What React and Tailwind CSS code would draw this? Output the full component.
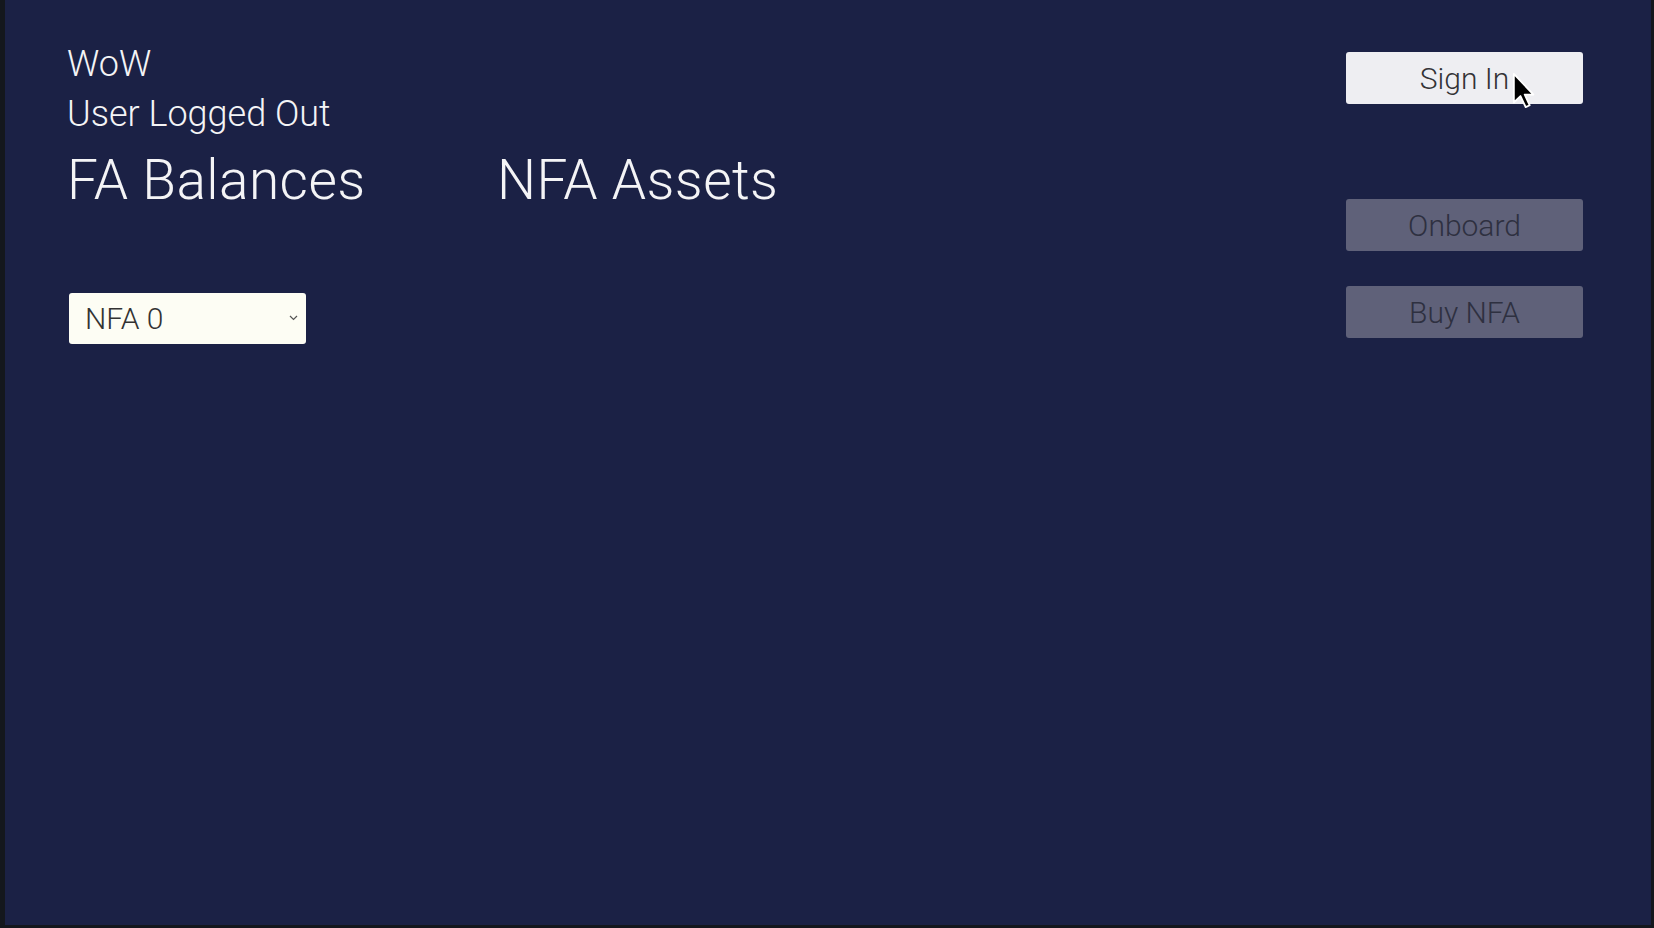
import React from 'react';

const font = { fontFamily: '"Roboto Light", Roboto, "Liberation Sans", sans-serif' };

const Cursor = () => (
  <svg
    className="absolute left-[1507px] top-[72px] pointer-events-none"
    width="24"
    height="37"
    viewBox="0 0 13 20"
  >
    <path
      d="M1 1 L1 16.5 L4.6 13 L7.4 19 L9.6 18 L6.9 12.2 L11.6 12.2 Z"
      fill="#000"
      stroke="#fff"
      strokeWidth="1"
      strokeLinejoin="round"
    />
  </svg>
);

const ActionButton = ({ children, disabled, className }) => (
  <button
    disabled={disabled}
    className={
      'h-[52px] w-[237px] rounded-[3px] text-[30px] font-light ' +
      (disabled ? 'bg-[#5f6179] text-[#2e3040] ' : 'bg-[#eeeef2] text-[#333336] ') +
      (className || '')
    }
  >
    {children}
  </button>
);

export default function App() {
  return (
    <div
      style={font}
      className="relative h-[928px] w-[1654px] overflow-hidden bg-[#1b2145] border-l-[5px] border-r-[3px] border-b-[3px] border-[#14171d]"
    >
      <div className="flex justify-between pl-[62px] pr-[68px]">
        {/* Left side */}
        <div className="pt-[39px] text-[#f4f4f6] font-light">
          <div className="text-[36px] leading-[50px]">WoW</div>
          <div className="text-[36px] leading-[50px]">User Logged Out</div>
          <div className="mt-[9px] flex text-[55px] leading-[65px] tracking-[0.4px]">
            <h2 className="w-[430px]">FA Balances</h2>
            <h2>NFA Assets</h2>
          </div>
          <div className="mt-[80px] ml-[2px]">
            <div className="relative flex h-[51px] w-[237px] items-center rounded-[3px] bg-[#fdfdf4] pl-[16px] text-[30px] font-light text-[#333]">
              NFA 0
              <svg
                className="absolute right-[8px] top-[22px]"
                width="9"
                height="6"
                viewBox="0 0 9 6"
              >
                <path d="M1 1 L4.5 4.5 L8 1" fill="none" stroke="#555" strokeWidth="1.2" />
              </svg>
            </div>
          </div>
        </div>

        {/* Right side */}
        <div className="flex flex-col pt-[52px]">
          <ActionButton>Sign In</ActionButton>
          <ActionButton disabled className="mt-[95px]">Onboard</ActionButton>
          <ActionButton disabled className="mt-[35px]">Buy NFA</ActionButton>
        </div>
      </div>
      <Cursor />
    </div>
  );
}
